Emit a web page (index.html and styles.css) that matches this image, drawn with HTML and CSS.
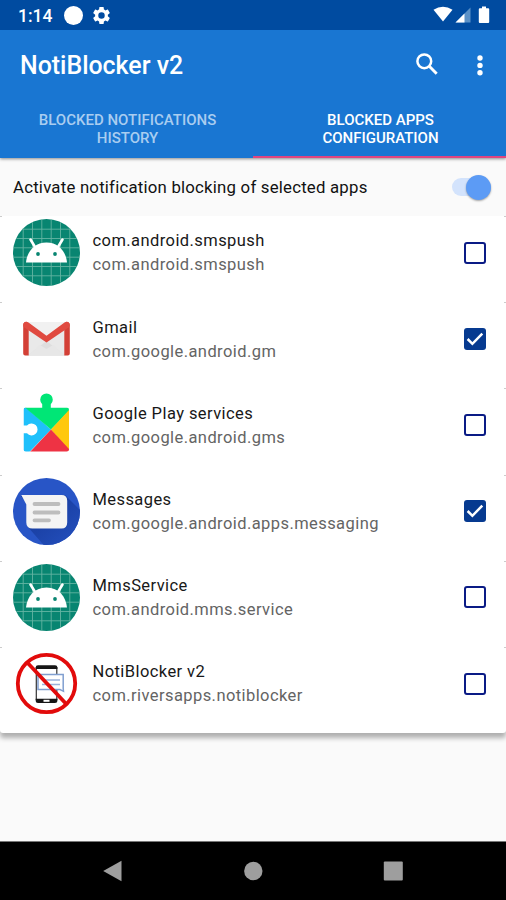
FILE: index.html
```
<!DOCTYPE html>
<html lang="en">
<head>
<meta charset="utf-8">
<title>NotiBlocker v2</title>
<link rel="stylesheet" href="styles.css">
</head>
<body>
<svg class="defs" width="0" height="0" aria-hidden="true">
  <defs>
    <clipPath id="disc"><circle cx="33.5" cy="33.5" r="33.5"/></clipPath>
    <linearGradient id="msg-shade" x1="0.2" y1="0.2" x2="0.9" y2="0.9"><stop offset="0" stop-color="#173b9c"/><stop offset="1" stop-color="#2450be"/></linearGradient>
    <symbol id="android" viewBox="0 0 67 67">
      <g clip-path="url(#disc)">
        <rect width="67" height="67" fill="#088571"/>
        <path d="M10.2 0V67M19.5 0V67M28.8 0V67M38.2 0V67M47.5 0V67M56.8 0V67M0 10.2H67M0 19.5H67M0 28.8H67M0 38.2H67M0 47.5H67M0 56.8H67" stroke="#63b3a3" stroke-width=".9"/>
        <path d="M17.5 20.5L22 28M49.5 20.5L45 28" stroke="#fff" stroke-width="2.6" stroke-linecap="round"/>
        <path d="M13 43.5C14 33 21 23.5 33.5 23.5S53 33 54 43.5Z" fill="#fff"/>
        <circle cx="25" cy="35" r="1.9" fill="#088571"/><circle cx="42" cy="35" r="1.9" fill="#088571"/>
      </g>
    </symbol>
  </defs>
</svg>
<div class="screen">
  <header class="status">
    <span class="time">1:14</span>
    <span class="dot"></span>
    <svg class="gear" viewBox="2 2 20 20"><path fill="#fff" fill-rule="evenodd" d="M19.43 12.98c.04-.32.07-.64.07-.98s-.03-.66-.07-.98l2.11-1.65c.19-.15.24-.42.12-.64l-2-3.46c-.12-.22-.39-.3-.61-.22l-2.49 1c-.52-.4-1.08-.73-1.69-.98l-.38-2.65C14.46 2.18 14.25 2 14 2h-4c-.25 0-.46.18-.49.42l-.38 2.65c-.61.25-1.17.59-1.69.98l-2.49-1c-.23-.09-.49 0-.61.22l-2 3.46c-.13.22-.07.49.12.64l2.11 1.65c-.04.32-.07.65-.07.98s.03.66.07.98l-2.11 1.65c-.19.15-.24.42-.12.64l2 3.46c.12.22.39.3.61.22l2.49-1c.52.4 1.08.73 1.69.98l.38 2.65c.03.24.24.42.49.42h4c.25 0 .46-.18.49-.42l.38-2.65c.61-.25 1.17-.59 1.69-.98l2.49 1c.23.09.49 0 .61-.22l2-3.46c.12-.22.07-.49-.12-.64zM12 15.8a3.8 3.8 0 1 1 0-7.6 3.8 3.8 0 0 1 0 7.6Z"/></svg>
    <svg class="signals" viewBox="0 0 58 18">
      <path d="M.5 3.8Q10 -2.2 19.5 3.8L10 15.5Z" fill="#fff"/>
      <path d="M37.5 1.5V16.5H22.5Z" fill="#5b91c7"/><path d="M31.5 7.5V16.5H22.5Z" fill="#fff"/>
      <path d="M49 2.2V.6h4v1.6h2.2q1 0 1 1V16q0 1-1 1h-8.4q-1 0-1-1V3.2q0-1 1-1Z" fill="#fff"/>
    </svg>
  </header>
  <div class="appbar">
    <h1>NotiBlocker v2</h1>
    <svg class="search" viewBox="0 0 22 22"><circle cx="8.3" cy="8.3" r="6.9" fill="none" stroke="#fff" stroke-width="2.5"/><path d="M13.3 13.3L20.7 20.7" stroke="#fff" stroke-width="2.9"/></svg>
    <svg class="more" viewBox="0 0 6 21"><g fill="#fff"><circle cx="3" cy="3" r="2.7"/><circle cx="3" cy="10.4" r="2.7"/><circle cx="3" cy="17.8" r="2.7"/></g></svg>
  </div>
  <nav class="tabs">
    <div class="tab">BLOCKED NOTIFICATIONS<br>HISTORY</div>
    <div class="tab active">BLOCKED APPS<br>CONFIGURATION</div>
  </nav>
  <div class="activate">
    <span class="label">Activate notification blocking of selected apps</span>
    <span class="switch"><span class="thumb"></span></span>
  </div>
  <main class="list">
    <div class="row">
      <svg class="icon" viewBox="0 0 67 67"><use href="#android"/></svg>
      <div class="names"><div class="name">com.android.smspush</div><div class="pkg">com.android.smspush</div></div>
      <span class="box"></span>
    </div>
    <div class="row">
      <svg class="icon" viewBox="0 0 67 67">
        <rect x="12" y="17" width="43" height="33.5" rx="2" fill="#e9e9e9"/>
        <path d="M15 50.5L33.5 36L52 50.5Z" fill="#dedede"/><path d="M15 50.5L27 40L33.5 44L40 40L52 50.5Z" fill="#e7e7e7"/>
        <path d="M13 17H54L33.5 32Z" fill="#f1f1f1"/>
        <path d="M10.2 20.3Q10.2 16.8 13.5 16.8L15.7 24V50.5H12.2Q10.2 50.5 10.2 48.5ZM56.8 20.3Q56.8 16.8 53.5 16.8L51.3 24V50.5H54.8Q56.8 50.5 56.8 48.5Z" fill="#d34036"/>
        <path d="M10.2 20.3Q10.2 16.8 13.4 16.8Q14.5 16.8 15.5 17.6L33.5 30.7L51.5 17.6Q52.5 16.8 53.6 16.8Q56.8 16.8 56.8 20.3Q56.8 21.6 55.6 22.5L33.5 37.5L11.4 22.5Q10.2 21.6 10.2 20.3Z" fill="#e04a40"/>
      </svg>
      <div class="names"><div class="name">Gmail</div><div class="pkg">com.google.android.gm</div></div>
      <span class="box checked"><svg viewBox="0 0 22 22"><path d="M3.6 11L8.4 15.8L18.3 5.6" fill="none" stroke="#fff" stroke-width="2.5"/></svg></span>
    </div>
    <div class="row">
      <svg class="icon" viewBox="0 0 67 67">
        <clipPath id="puzzle"><rect x="10.5" y="16.5" width="45.5" height="44" rx="2.3"/></clipPath>
        <g clip-path="url(#puzzle)">
          <path d="M10.5 16.5H13L38 38.5L16 61.5H10.5Z" fill="#1fc0fb"/>
          <path d="M12 16.5H56V20L38 38.5Z" fill="#00e676"/>
          <path d="M56 19V60L38 38.5Z" fill="#ffc80d"/>
          <path d="M38 38.5L57 59V61.5H16.5Z" fill="#ee3344"/>
        </g>
        <path d="M29.2 17V13.3A6.3 6.3 0 1 1 37.8 13.3V17Z" fill="#00e676"/>
        <path d="M10 34.5H14A6 6 0 1 1 14 42.3H10Z" fill="#fff"/>
      </svg>
      <div class="names"><div class="name">Google Play services</div><div class="pkg">com.google.android.gms</div></div>
      <span class="box"></span>
    </div>
    <div class="row">
      <svg class="icon" viewBox="0 0 67 67">
        <g clip-path="url(#disc)">
          <rect width="67" height="67" fill="#2855c6"/>
          <path d="M8 18L52 17L72 37V72H35L14 48L15 27Z" fill="url(#msg-shade)"/>
        </g>
        <path d="M8.3 17H48.5Q54.2 17 54.2 22.7V44.5Q54.2 50.5 48.5 50.5H19.5Q13.3 50.5 13.3 44.5V26.5Z" fill="#f4f4f4"/>
        <path d="M21.5 26H45.5M21.5 34.5H45.5M21.5 42.3H36" stroke="#bdbdbd" stroke-width="3.8" stroke-linecap="round"/>
      </svg>
      <div class="names"><div class="name">Messages</div><div class="pkg">com.google.android.apps.messaging</div></div>
      <span class="box checked"><svg viewBox="0 0 22 22"><path d="M3.6 11L8.4 15.8L18.3 5.6" fill="none" stroke="#fff" stroke-width="2.5"/></svg></span>
    </div>
    <div class="row">
      <svg class="icon" viewBox="0 0 67 67"><use href="#android"/></svg>
      <div class="names"><div class="name">MmsService</div><div class="pkg">com.android.mms.service</div></div>
      <span class="box"></span>
    </div>
    <div class="row">
      <svg class="icon" viewBox="0 0 67 67">
        <path d="M23.3 17V50M43.8 17V50" stroke="#333" stroke-width="1.2"/>
        <path d="M22.7 17.5Q22.7 15.2 25 15.2H42Q44.4 15.2 44.4 17.5V19H22.7ZM22.7 48.8H44.4V51Q44.4 53 42 53H25Q22.7 53 22.7 51Z" fill="#161616"/>
        <rect x="30.5" y="49.8" width="6" height="2" fill="#fff"/>
        <path d="M25 24.5H50.2V38.5L50.5 41.3L47 39.5H25Z" fill="#fff" stroke="#819fd0" stroke-width="1.5"/>
        <path d="M29 30H47M29 34.5H47" stroke="#9bb3dc" stroke-width="1.3"/>
        <circle cx="33.5" cy="33.5" r="28.7" fill="none" stroke="#e20b0b" stroke-width="3.8"/>
        <path d="M14 12.3L53.5 54.2" stroke="#e20b0b" stroke-width="3.8"/>
      </svg>
      <div class="names"><div class="name">NotiBlocker v2</div><div class="pkg">com.riversapps.notiblocker</div></div>
      <span class="box"></span>
    </div>
  </main>
  <footer class="navbar">
    <svg viewBox="0 0 20 22"><path d="M.2 11L18.5 .8V21.2Z" fill="#9e9e9e"/></svg>
    <svg viewBox="0 0 20 22"><circle cx="10.3" cy="11" r="9.2" fill="#9e9e9e"/></svg>
    <svg viewBox="0 0 20 22"><rect x=".8" y="1.5" width="19" height="19" rx="1" fill="#9e9e9e"/></svg>
  </footer>
</div>
</body>
</html>
```

FILE: styles.css
```
* { box-sizing: border-box; }
body { margin: 0; font-family: Roboto, "Liberation Sans", sans-serif; background: #fafafa; }
svg { display: block; flex: none; }
.defs { position: absolute; }
.screen { width: 506px; height: 900px; display: flex; flex-direction: column; overflow: hidden; }
.status { height: 30px; flex: none; background: #004ba0; display: flex; align-items: center; padding: 0 15px 0 18px; color: #fff; }
.time { font-size: 17.5px; font-weight: 500; width: 46px; padding-top: 2px; }
.dot { width: 19px; height: 19px; border-radius: 50%; background: #fff; }
.gear { width: 17px; height: 17px; margin-left: 10px; }
.signals { width: 58px; height: 18px; margin-left: auto; }
.appbar { height: 70px; flex: none; background: #1976d2; display: flex; align-items: center; padding: 0 23px 0 20px; color: #fff; position: relative; z-index: 1; }
.appbar h1 { margin: 0; font-size: 24.9px; line-height: 30px; font-weight: 500; flex: 1; padding-top: 2px; }
.search { width: 22px; height: 22px; margin: 0 39px 2px 0; }
.more { width: 6px; height: 21px; }
.tabs { height: 57.5px; flex: none; display: flex; background: #1976d2; box-shadow: 0 1px 3px rgba(0,0,0,.45); position: relative; }
.tab { flex: 1; text-align: center; padding: 11px 0 0 2px; font-size: 15px; line-height: 18px; font-weight: 500; color: #a9cdf0; }
.tab.active { color: #fff; border-bottom: 2.5px solid #e0457f; }
.activate { height: 58.5px; flex: none; display: flex; align-items: center; justify-content: space-between; padding: 1px 15px 0 13px; font-size: 16.8px; color: #111; }
.label { letter-spacing: .21px; }
.switch { width: 39px; height: 18px; display: flex; align-items: center; justify-content: flex-end; background: #d3e3fc; border-radius: 9px; }
.thumb { width: 25px; height: 25px; flex: none; border-radius: 50%; background: #5c9bf5; box-shadow: 0 1px 2px rgba(0,0,0,.35); }
.list { flex: none; background: #fff; box-shadow: 0 5px 5px rgba(0,0,0,.3); border-radius: 0 0 3px 3px; }
.row { height: 86.2px; display: flex; align-items: flex-start; padding: 3px 20px 0 13px; background: linear-gradient(#ccc, #ccc) 0 0 / 2px 1px no-repeat, linear-gradient(#ccc, #ccc) 100% 0 / 2px 1px no-repeat; }
.icon { width: 67px; height: 67px; }
.names { flex: 1; padding: 10.4px 0 0 12.5px; font-size: 16.5px; line-height: 24px; white-space: nowrap; letter-spacing: .42px; }
.name { color: #181818; }
.pkg { color: #646464; }
.box { width: 22px; height: 22px; margin-top: 22.7px; border: 2px solid #0a1b85; border-radius: 3px; flex: none; }
.box.checked { border: 0; background: #063a90; }
.navbar { height: 59px; margin-top: auto; flex: none; background: #000; border-top: 1px solid #777; display: flex; justify-content: center; gap: 120px; align-items: center; }
.navbar svg { width: 20px; height: 22px; }
```
